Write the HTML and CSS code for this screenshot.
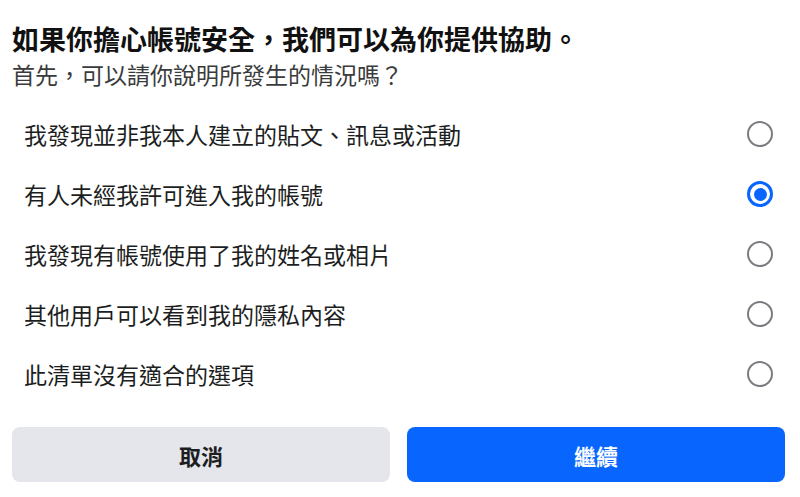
FILE: index.html
```html
<!DOCTYPE html>
<html lang="zh-Hant">
<head>
<meta charset="utf-8">
<link rel="stylesheet" href="styles.css">
</head>
<body>
<div class="dialog">
  <h1 class="title">如果你擔心帳號安全，我們可以為你提供協助。</h1>
  <p class="subtitle">首先，可以請你說明所發生的情況嗎？</p>
  <ul class="options">
    <li class="option"><span class="label">我發現並非我本人建立的貼文、訊息或活動</span><span class="radio"></span></li>
    <li class="option"><span class="label">有人未經我許可進入我的帳號</span><span class="radio checked"></span></li>
    <li class="option"><span class="label">我發現有帳號使用了我的姓名或相片</span><span class="radio"></span></li>
    <li class="option"><span class="label">其他用戶可以看到我的隱私內容</span><span class="radio"></span></li>
    <li class="option"><span class="label">此清單沒有適合的選項</span><span class="radio"></span></li>
  </ul>
  <div class="actions">
    <button class="btn btn-cancel">取消</button>
    <button class="btn btn-primary">繼續</button>
  </div>
</div>
</body>
</html>
```

FILE: styles.css
```css
html, body {
  margin: 0;
  padding: 0;
  background: #ffffff;
}

body {
  font-family: "Noto Sans CJK TC", "Noto Sans", sans-serif;
  color: #1c1e21;
}

.dialog {
  width: 773px;
  padding: 23px 0 0 12px;
}

.title {
  margin: 0;
  font-size: 27px;
  line-height: 32px;
  font-weight: 700;
  color: #111111;
}

.subtitle {
  margin: 4px 0 0;
  font-size: 23px;
  line-height: 30px;
  font-weight: 400;
  color: #3a3b3c;
}

.options {
  list-style: none;
  margin: 15px 0 0;
  padding: 0;
}

.option {
  height: 60px;
  display: flex;
  align-items: center;
  justify-content: space-between;
  padding: 0 12px;
}

.label {
  font-size: 23px;
  line-height: 30px;
  color: #1c1e21;
}

.radio {
  width: 26px;
  height: 26px;
  box-sizing: border-box;
  border: 2px solid #7a7c80;
  border-radius: 50%;
  display: flex;
  align-items: center;
  justify-content: center;
}

.radio.checked {
  border: 3px solid #0866ff;
}

.radio.checked::after {
  content: "";
  width: 13px;
  height: 13px;
  border-radius: 50%;
  background: #0866ff;
}

.actions {
  display: flex;
  gap: 17px;
  margin-top: 23px;
}

.btn {
  flex: 1;
  height: 55px;
  border: none;
  border-radius: 8px;
  font-family: "Noto Sans CJK TC", "Noto Sans", sans-serif;
  font-size: 22px;
  font-weight: 700;
  cursor: pointer;
}

.btn-cancel {
  background: #e4e6eb;
  color: #1c1e21;
}

.btn-primary {
  background: #0866ff;
  color: #ffffff;
}
```
